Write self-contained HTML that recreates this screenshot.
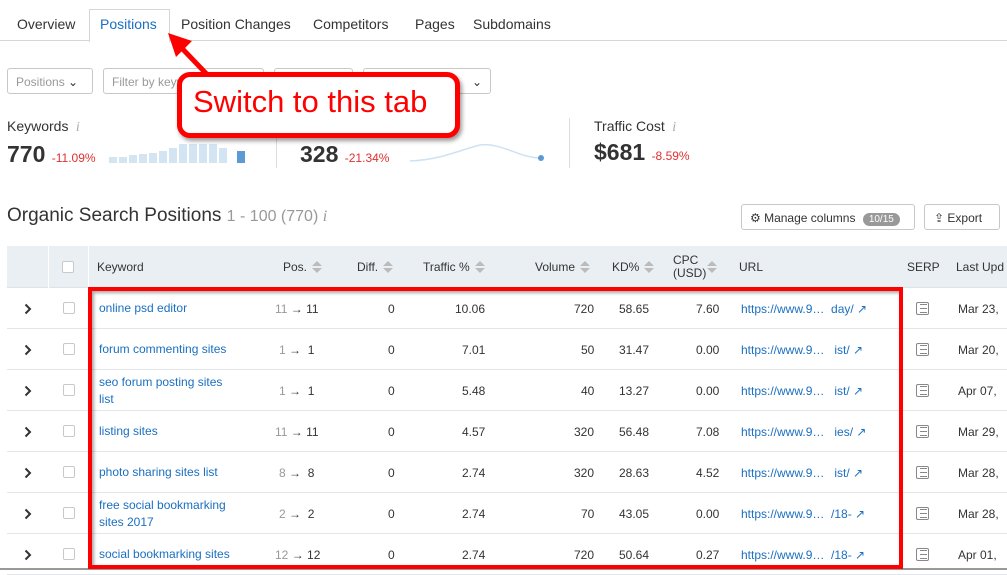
<!DOCTYPE html>
<html><head><meta charset="utf-8"><style>
*{margin:0;padding:0;box-sizing:border-box}
body{width:1007px;height:570px;overflow:hidden;background:#fff;font-family:"Liberation Sans",sans-serif;color:#333;position:relative}
.a{position:absolute;white-space:nowrap}
.tab{position:absolute;top:16px;font-size:14px;color:#333}
.sel{position:absolute;top:68px;height:26px;border:1px solid #c8c8c8;border-radius:3px;font-size:12px;color:#999;padding:6px 8px}
.red{color:#e03030;font-size:12px}
.th{position:absolute;top:260px;font-size:12px;color:#333}
.row{position:absolute;left:7px;width:1000px;height:41px;border-bottom:1px solid #e2e6ea}
.c{position:absolute;font-size:12px;white-space:nowrap}
.kw{color:#1a6fc0;left:92px;line-height:17px}
.cb{position:absolute;left:56px;width:12px;height:12px;border:1px solid #c9c9c9;border-radius:2px;top:14px}
.chev{position:absolute;left:17px;top:15px}
.link{color:#1a6fc0}
.serp{position:absolute;left:909px;top:14px;width:13px;height:13px;border:1px solid #888;border-radius:2px;background:repeating-linear-gradient(#fff 0 3px,#888 3px 4px);background-size:7px 4px;background-position:3px 2px;background-repeat:repeat-y}
.sort{display:inline-block;width:0;height:0;margin-left:5px;vertical-align:middle;border-left:5px solid transparent;border-right:5px solid transparent;border-bottom:5px solid #bbb;position:relative;top:-4px}
.sort:after{content:"";position:absolute;left:-5px;top:7px;border-left:5px solid transparent;border-right:5px solid transparent;border-top:5px solid #bbb}
</style></head><body>
<div class="a" style="left:0;top:40px;width:1007px;height:1px;background:#d6d6d6"></div>
<div class="a" style="left:89px;top:9px;width:81px;height:33px;border:1px solid #d6d6d6;border-bottom:none;background:#fff"></div>
<div class="tab" style="left:17px">Overview</div>
<div class="tab" style="left:100px;color:#1a6fc0">Positions</div>
<div class="tab" style="left:181px">Position Changes</div>
<div class="tab" style="left:313px">Competitors</div>
<div class="tab" style="left:415px">Pages</div>
<div class="tab" style="left:473px">Subdomains</div>

<div class="sel" style="left:7px;width:86px">Positions <span style="color:#333">⌄</span></div>
<div class="sel" style="left:103px;width:161px">Filter by keyword</div>
<div class="sel" style="left:274px;width:79px"></div>
<div class="sel" style="left:363px;width:128px;text-align:right;color:#333">⌄</div>

<div class="a" style="left:7px;top:118px;font-size:14px">Keywords <span style="color:#aaa;font-style:italic;font-family:'Liberation Serif'">&nbsp;i</span></div>
<div class="a" style="left:7px;top:141px;font-size:23px;font-weight:bold">770 <span class="red" style="font-weight:normal">-11.09%</span></div>
<div class="a" style="left:109px;top:144px;height:19px;width:140px">
<svg width="140" height="19"><g fill="#d3e4f3"><rect x="0" y="13" width="8" height="6"/><rect x="10" y="13" width="8" height="6"/><rect x="20" y="11" width="8" height="8"/><rect x="30" y="10" width="8" height="9"/><rect x="40" y="9" width="8" height="10"/><rect x="50" y="7" width="8" height="12"/><rect x="60" y="4" width="8" height="15"/><rect x="70" y="0" width="8" height="19"/><rect x="80" y="0" width="8" height="19"/><rect x="90" y="0" width="8" height="19"/><rect x="100" y="0" width="8" height="19"/><rect x="110" y="4" width="8" height="15"/></g><rect x="128" y="7" width="8" height="12" fill="#5d9ad4"/></svg></div>
<div class="a" style="left:276px;top:118px;width:1px;height:50px;background:#ddd"></div>
<div class="a" style="left:300px;top:141px;font-size:23px;font-weight:bold">328 <span class="red" style="font-weight:normal">-21.34%</span></div>
<svg class="a" style="left:410px;top:140px" width="140" height="24"><path d="M0 21 C30 20 50 10 70 5 C90 2 110 18 130 18" fill="none" stroke="#cfe2f3" stroke-width="1.5"/><circle cx="131" cy="18" r="3" fill="#5d9ad4"/></svg>
<div class="a" style="left:569px;top:118px;width:1px;height:50px;background:#ddd"></div>
<div class="a" style="left:594px;top:118px;font-size:14px">Traffic Cost <span style="color:#aaa;font-style:italic;font-family:'Liberation Serif'">&nbsp;i</span></div>
<div class="a" style="left:594px;top:139px;font-size:23px;font-weight:bold">$681 <span class="red" style="font-weight:normal">-8.59%</span></div>

<svg class="a" style="left:160px;top:28px" width="70" height="70"><line x1="60" y1="60" x2="14" y2="12" stroke="#f00" stroke-width="5"/><polygon points="8,5 32,13 16,29" fill="#f00"/></svg>
<div class="a" style="left:177px;top:72px;width:283px;height:66px;border:5px solid #f00;border-radius:13px;background:#fff;box-shadow:2px 3px 4px rgba(0,0,0,.4);color:#f00;font-size:31px;padding:7px 0 0 11px">Switch to this tab</div>

<div class="a" style="left:7px;top:205px;font-size:19px;color:#333">Organic Search Positions <span style="color:#999;font-size:16px">1 - 100 (770) <i style="font-family:'Liberation Serif'">i</i></span></div>
<div class="a" style="left:741px;top:204px;width:174px;height:26px;border:1px solid #c8c8c8;border-radius:3px;font-size:12px;padding:6px 0 0 8px">⚙ Manage columns <span style="background:#999;color:#fff;border-radius:8px;padding:1px 6px;font-size:10px;margin-left:4px">10/15</span></div>
<div class="a" style="left:924px;top:204px;width:76px;height:26px;border:1px solid #c8c8c8;border-radius:3px;font-size:12px;padding:6px 0 0 9px">⇪ Export</div>

<div class="a" style="left:7px;top:246px;width:1000px;height:42px;background:#eaeff3;border-bottom:1px solid #dde3e8"></div>
<div class="a" style="left:48px;top:246px;width:1px;height:42px;background:#fff"></div>
<div class="a" style="left:88px;top:246px;width:1px;height:42px;background:#fff"></div>
<div class="a" style="left:62px;top:261px;width:12px;height:12px;border:1px solid #c9c9c9;border-radius:2px;background:#fff"></div>
<div class="th" style="left:97px">Keyword</div>
<div class="th" style="left:283px">Pos.<span class="sort"></span></div>
<div class="th" style="left:357px">Diff.<span class="sort"></span></div>
<div class="th" style="left:423px">Traffic %<span class="sort"></span></div>
<div class="th" style="left:535px">Volume<span class="sort"></span></div>
<div class="th" style="left:612px">KD%<span class="sort"></span></div>
<div class="th" style="left:673px;top:254px;line-height:13px">CPC<br>(USD)</div><div class="th" style="left:702px"><span class="sort"></span></div>
<div class="th" style="left:739px">URL</div>
<div class="th" style="left:907px">SERP</div>
<div class="th" style="left:956px">Last Upd</div>

<div style="position:absolute;left:0;top:288px">
<div class="row" style="top:0"><svg class="chev" width="8" height="12"><path d="M1.5 1.5L6 6L1.5 10.5" fill="none" stroke="#333" stroke-width="2"/></svg><div class="cb"></div><div class="c kw" style="top:12px">online psd editor</div><div class="c" style="left:268px;top:14px"><span style="color:#999">11</span> → 11</div><div class="c" style="left:381px;top:14px">0</div><div class="c" style="left:448px;top:14px">10.06</div><div class="c" style="left:567px;top:14px">720</div><div class="c" style="left:612px;top:14px">58.65</div><div class="c" style="left:689px;top:14px">7.60</div><div class="c link" style="left:734px;top:14px">https://www.9…&nbsp;&nbsp;day/ ↗</div><div class="serp"></div><div class="c" style="left:951px;top:14px">Mar 23,</div></div>
<div class="row" style="top:41px"><svg class="chev" width="8" height="12"><path d="M1.5 1.5L6 6L1.5 10.5" fill="none" stroke="#333" stroke-width="2"/></svg><div class="cb"></div><div class="c kw" style="top:12px">forum commenting sites</div><div class="c" style="left:272px;top:14px"><span style="color:#999">1</span> → &nbsp;1</div><div class="c" style="left:381px;top:14px">0</div><div class="c" style="left:455px;top:14px">7.01</div><div class="c" style="left:574px;top:14px">50</div><div class="c" style="left:612px;top:14px">31.47</div><div class="c" style="left:689px;top:14px">0.00</div><div class="c link" style="left:734px;top:14px">https://www.9…&nbsp;&nbsp;&nbsp;ist/ ↗</div><div class="serp"></div><div class="c" style="left:951px;top:14px">Mar 20,</div></div>
<div class="row" style="top:82px"><svg class="chev" width="8" height="12"><path d="M1.5 1.5L6 6L1.5 10.5" fill="none" stroke="#333" stroke-width="2"/></svg><div class="cb"></div><div class="c kw" style="top:4px">seo forum posting sites<br>list</div><div class="c" style="left:272px;top:14px"><span style="color:#999">1</span> → &nbsp;1</div><div class="c" style="left:381px;top:14px">0</div><div class="c" style="left:455px;top:14px">5.48</div><div class="c" style="left:574px;top:14px">40</div><div class="c" style="left:612px;top:14px">13.27</div><div class="c" style="left:689px;top:14px">0.00</div><div class="c link" style="left:734px;top:14px">https://www.9…&nbsp;&nbsp;&nbsp;ist/ ↗</div><div class="serp"></div><div class="c" style="left:951px;top:14px">Apr 07,</div></div>
<div class="row" style="top:123px"><svg class="chev" width="8" height="12"><path d="M1.5 1.5L6 6L1.5 10.5" fill="none" stroke="#333" stroke-width="2"/></svg><div class="cb"></div><div class="c kw" style="top:12px">listing sites</div><div class="c" style="left:268px;top:14px"><span style="color:#999">11</span> → 11</div><div class="c" style="left:381px;top:14px">0</div><div class="c" style="left:455px;top:14px">4.57</div><div class="c" style="left:567px;top:14px">320</div><div class="c" style="left:612px;top:14px">56.48</div><div class="c" style="left:689px;top:14px">7.08</div><div class="c link" style="left:734px;top:14px">https://www.9…&nbsp;&nbsp;&nbsp;ies/ ↗</div><div class="serp"></div><div class="c" style="left:951px;top:14px">Mar 29,</div></div>
<div class="row" style="top:164px"><svg class="chev" width="8" height="12"><path d="M1.5 1.5L6 6L1.5 10.5" fill="none" stroke="#333" stroke-width="2"/></svg><div class="cb"></div><div class="c kw" style="top:12px">photo sharing sites list</div><div class="c" style="left:272px;top:14px"><span style="color:#999">8</span> → &nbsp;8</div><div class="c" style="left:381px;top:14px">0</div><div class="c" style="left:455px;top:14px">2.74</div><div class="c" style="left:567px;top:14px">320</div><div class="c" style="left:612px;top:14px">28.63</div><div class="c" style="left:689px;top:14px">4.52</div><div class="c link" style="left:734px;top:14px">https://www.9…&nbsp;&nbsp;&nbsp;ist/ ↗</div><div class="serp"></div><div class="c" style="left:951px;top:14px">Mar 28,</div></div>
<div class="row" style="top:205px"><svg class="chev" width="8" height="12"><path d="M1.5 1.5L6 6L1.5 10.5" fill="none" stroke="#333" stroke-width="2"/></svg><div class="cb"></div><div class="c kw" style="top:4px">free social bookmarking<br>sites 2017</div><div class="c" style="left:272px;top:14px"><span style="color:#999">2</span> → &nbsp;2</div><div class="c" style="left:381px;top:14px">0</div><div class="c" style="left:455px;top:14px">2.74</div><div class="c" style="left:574px;top:14px">70</div><div class="c" style="left:612px;top:14px">43.05</div><div class="c" style="left:689px;top:14px">0.00</div><div class="c link" style="left:734px;top:14px">https://www.9…&nbsp;&nbsp;/18- ↗</div><div class="serp"></div><div class="c" style="left:951px;top:14px">Mar 28,</div></div>
<div class="row" style="top:246px"><svg class="chev" width="8" height="12"><path d="M1.5 1.5L6 6L1.5 10.5" fill="none" stroke="#333" stroke-width="2"/></svg><div class="cb"></div><div class="c kw" style="top:12px">social bookmarking sites</div><div class="c" style="left:268px;top:14px"><span style="color:#999">12</span> → 12</div><div class="c" style="left:381px;top:14px">0</div><div class="c" style="left:455px;top:14px">2.74</div><div class="c" style="left:567px;top:14px">720</div><div class="c" style="left:612px;top:14px">50.64</div><div class="c" style="left:689px;top:14px">0.27</div><div class="c link" style="left:734px;top:14px">https://www.9…&nbsp;&nbsp;/18- ↗</div><div class="serp"></div><div class="c" style="left:951px;top:14px">Apr 01,</div></div>
</div>
<div class="a" style="left:0;top:568px;width:1007px;height:2px;background:#999"></div>
<div class="a" style="left:88px;top:287px;width:815px;height:282px;border:4px solid #f00;box-shadow:inset 2px 2px 3px rgba(0,0,0,.35)"></div>
</body></html>
